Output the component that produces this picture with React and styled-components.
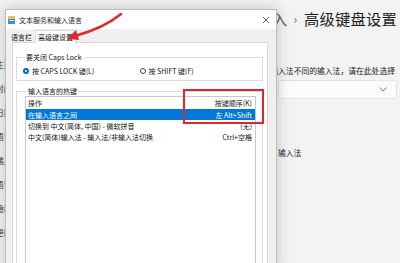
import styled, { createGlobalStyle } from "styled-components";

const GlobalStyle = createGlobalStyle`
  html, body {
    margin: 0;
    padding: 0;
    width: 400px;
    height: 263px;
    overflow: hidden;
    background: #f3f3f3;
    font-family: "Noto Sans CJK SC", "Noto Sans", sans-serif;
  }
`;

const navItems = ["主页", "时间和语言", "日期和时间", "语言和区域", "输入", "语音", "隐私", "更新"];

const hotkeys = [
  { action: "在输入语言之间", keys: "左 Alt+Shift", selected: true },
  { action: "切换到 中文(简体, 中国) - 微软拼音", keys: "(无)" },
  { action: "中文(简体)输入法 - 输入法/非输入法切换", keys: "Ctrl+空格" },
];

export default function App() {
  return (
    <Root>
      <GlobalStyle />
      <Settings>
        <Nav>
          {navItems.map((n) => (
            <NavItem key={n}>{n}</NavItem>
          ))}
        </Nav>
        <Main>
          <PageHeader>
            <Crumb>输入</Crumb>
            <Chevron>›</Chevron>
            <PageTitle>高级键盘设置</PageTitle>
          </PageHeader>
          <Description>
            <span>如果想为每个应用窗口设置不同输入法不同的输入法，请在此处选择</span>
          </Description>
          <Dropdown>
            <svg width="8" height="5" viewBox="0 0 8 5">
              <path d="M0.5 0.5 L4 4 L7.5 0.5" fill="none" stroke="#666" strokeWidth="0.9" />
            </svg>
          </Dropdown>
          <SectionLabel>输入法</SectionLabel>
        </Main>
      </Settings>

      <Dialog>
        <TitleBar>
          <AppIcon width="7" height="8" viewBox="0 0 7 8">
            <rect x="0" y="0" width="7" height="3" fill="#e8c25a" />
            <rect x="0" y="3" width="7" height="5" fill="#3f8fd2" />
            <rect x="1" y="4" width="5" height="1" fill="#cfe6f8" />
          </AppIcon>
          <Title>文本服务和输入语言</Title>
          <CloseBtn width="8" height="8" viewBox="0 0 8 8">
            <path d="M1 1 L7 7 M7 1 L1 7" stroke="#333" strokeWidth="0.8" />
          </CloseBtn>
        </TitleBar>
        <TabStrip>
          <Tab>语言栏</Tab>
          <Tab $active>高级键设置</Tab>
        </TabStrip>
        <TabPage>
          <Group>
            <Legend>要关闭 Caps Lock</Legend>
            <RadioRow>
              <Radio>
                <RadioDot $checked />
                按 CAPS LOCK 键(L)
              </Radio>
              <Radio>
                <RadioDot />
                按 SHIFT 键(F)
              </Radio>
            </RadioRow>
          </Group>
          <Group $second>
            <Legend>输入语言的热键</Legend>
            <List>
              <HeaderRow>
                <span>操作</span>
                <span>按键顺序(K)</span>
              </HeaderRow>
              {hotkeys.map((h) => (
                <Row key={h.action} $selected={h.selected}>
                  <span>{h.action}</span>
                  <span>{h.keys}</span>
                </Row>
              ))}
            </List>
          </Group>
        </TabPage>
      </Dialog>

      <Highlight />
      <Arrow width="60" height="34" viewBox="0 0 60 34">
        <path d="M57 3 Q40 17 11 25" fill="none" stroke="#e3262d" strokeWidth="2.4" strokeLinecap="round" />
        <polygon points="3,28 12,19 15,29" fill="#e3262d" />
      </Arrow>
    </Root>
  );
}

const Root = styled.div`
  position: relative;
  width: 400px;
  height: 263px;
  overflow: hidden;
`;

const Settings = styled.div`
  display: flex;
  height: 263px;
  background: #f3f3f3;
`;

const Nav = styled.div`
  width: 278px;
  flex-shrink: 0;
  padding-top: 59px;
  display: flex;
  flex-direction: column;
  gap: 12px;
`;

const NavItem = styled.div`
  margin-left: -4px;
  font-size: 7.8px;
  line-height: 12px;
  color: #333;
`;

const Main = styled.div`
  flex: 1;
  min-width: 0;
  padding: 8px 3px 0 0;
  display: flex;
  flex-direction: column;
`;

const PageHeader = styled.div`
  display: flex;
  justify-content: flex-end;
  align-items: center;
  gap: 6px;
  height: 20px;
  white-space: nowrap;
`;

const Crumb = styled.span`
  font-size: 15.3px;
  color: #5c5c5c;
`;

const Chevron = styled.span`
  font-size: 12px;
  color: #666;
  margin-right: 1px;
`;

const PageTitle = styled.span`
  font-size: 15.3px;
  color: #1b1b1b;
  letter-spacing: 0.2px;
`;

const Description = styled.div`
  display: flex;
  justify-content: flex-end;
  margin-top: 37px;
  padding-right: 2px;
  font-size: 7.8px;
  line-height: 12px;
  color: #222;
  white-space: nowrap;
`;

const Dropdown = styled.div`
  margin-top: 3px;
  height: 19px;
  box-sizing: border-box;
  background: #fbfbfb;
  border: 1px solid #e3e3e3;
  border-radius: 3px;
  display: flex;
  align-items: center;
  justify-content: flex-end;
  padding-right: 9px;
`;

const SectionLabel = styled.div`
  margin-top: 48px;
  font-size: 7.8px;
  line-height: 12px;
  color: #222;
`;

const Dialog = styled.div`
  position: absolute;
  left: 5px;
  top: 9px;
  width: 272px;
  height: 262px;
  box-sizing: border-box;
  background: #f0f0f0;
  border: 1px solid #bcbcbc;
  box-shadow: 0 0 14px rgba(0, 0, 0, 0.2);
  display: flex;
  flex-direction: column;
  overflow: hidden;
  font-size: 7px;
  color: #111;
`;

const TitleBar = styled.div`
  height: 19px;
  flex-shrink: 0;
  background: #fff;
  display: flex;
  align-items: center;
  padding: 0 6px 0 2px;
  gap: 4px;
`;

const AppIcon = styled.svg`
  flex-shrink: 0;
`;

const Title = styled.span`
  flex: 1;
  font-size: 7px;
  color: #222;
`;

const CloseBtn = styled.svg`
  flex-shrink: 0;
`;

const TabStrip = styled.div`
  height: 13px;
  flex-shrink: 0;
  display: flex;
  align-items: flex-end;
  padding-left: 2px;
  background: #f0f0f0;
`;

const Tab = styled.div`
  height: ${(p) => (p.$active ? "13px" : "11px")};
  padding: 0 2px;
  display: flex;
  align-items: center;
  box-sizing: border-box;
  background: ${(p) => (p.$active ? "#fff" : "transparent")};
  border: 1px solid ${(p) => (p.$active ? "#d9d9d9" : "transparent")};
  border-bottom: none;
  margin-bottom: ${(p) => (p.$active ? "-1px" : "0")};
  position: relative;
  color: #111;
`;

const TabPage = styled.div`
  flex: 1;
  min-height: 0;
  margin: 0 8px 0 6px;
  background: #fff;
  border: 1px solid #d9d9d9;
  padding: 10px 4px 0 3px;
  display: flex;
  flex-direction: column;
`;

const Group = styled.fieldset`
  flex-shrink: 0;
  margin: ${(p) => (p.$second ? "6px 0 0" : "0")};
  padding: ${(p) => (p.$second ? "0 6px 0 8px" : "4px 6px 5px 6px")};
  border: 1px solid #dcdcdc;
  ${(p) => p.$second && "border-bottom: none; flex: 1 1 auto; min-height: 0;"}
  min-width: 0;
`;

const Legend = styled.legend`
  padding: 0 1px;
  margin-left: 2px;
  line-height: 9px;
  font-size: 7px;
  color: #111;
`;

const RadioRow = styled.div`
  display: flex;
  height: 9px;
  align-items: center;
`;

const Radio = styled.label`
  display: flex;
  align-items: center;
  gap: 3px;
  width: 129px;
  white-space: nowrap;
`;

const RadioDot = styled.span`
  width: 6px;
  height: 6px;
  box-sizing: border-box;
  border-radius: 50%;
  border: ${(p) => (p.$checked ? "2px solid #0067c0" : "0.8px solid #444")};
  background: #fff;
  flex-shrink: 0;
`;

const List = styled.div`
  height: 170px;
  background: #fff;
  border: 1px solid #c9c9c9;
  display: flex;
  flex-direction: column;
`;

const HeaderRow = styled.div`
  height: 12px;
  flex-shrink: 0;
  display: flex;
  justify-content: space-between;
  align-items: center;
  padding: 0 3px 0 2px;
  color: #222;
`;

const Row = styled.div`
  height: 11px;
  flex-shrink: 0;
  display: flex;
  justify-content: space-between;
  align-items: center;
  padding: 0 3px 0 2px;
  white-space: nowrap;
  background: ${(p) => (p.$selected ? "#0078d7" : "transparent")};
  color: ${(p) => (p.$selected ? "#fff" : "#111")};
`;

const Highlight = styled.div`
  position: absolute;
  left: 183px;
  top: 89px;
  width: 81px;
  height: 35px;
  box-sizing: border-box;
  border: 2px solid #e3262d;
`;

const Arrow = styled.svg`
  position: absolute;
  left: 64px;
  top: 11px;
`;
